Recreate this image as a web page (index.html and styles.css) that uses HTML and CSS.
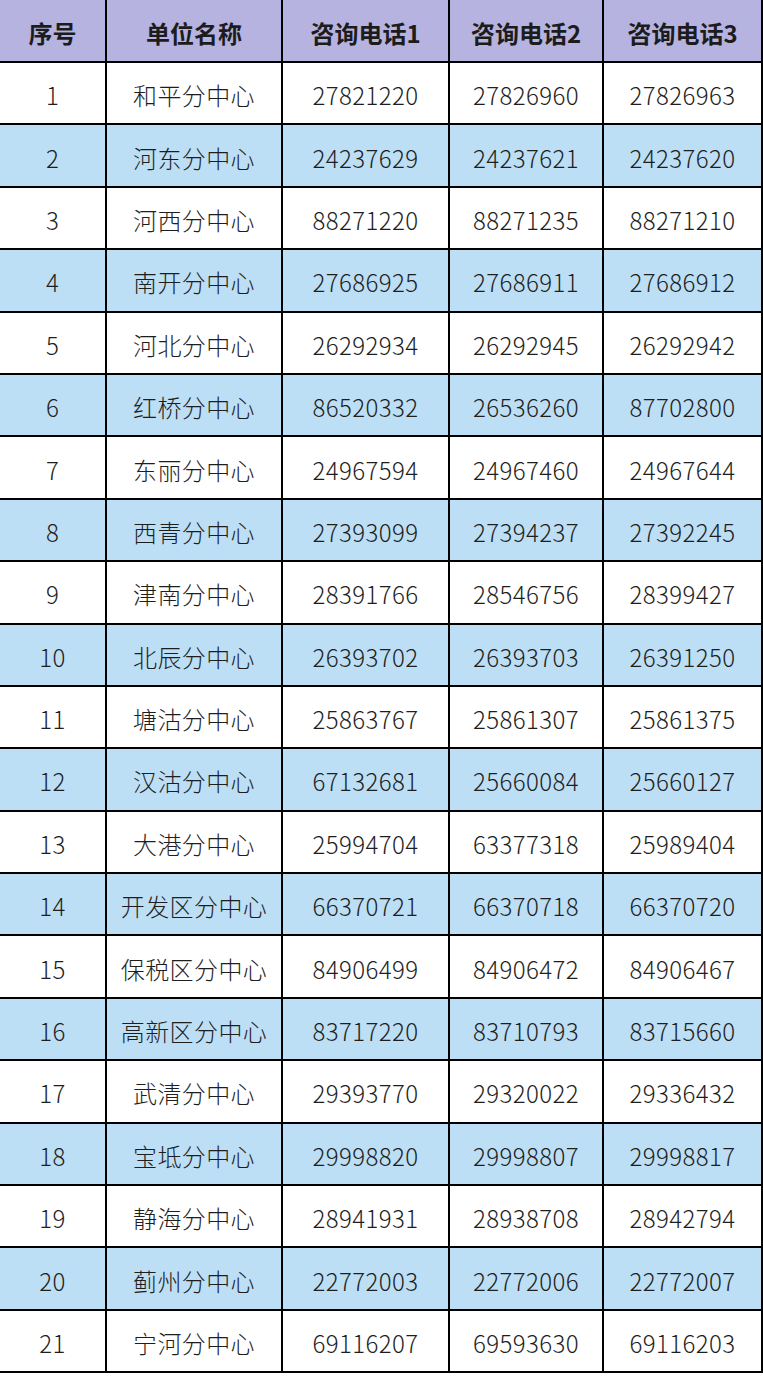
FILE: index.html
```html
<!DOCTYPE html>
<html lang="zh-CN">
<head>
<meta charset="utf-8">
<title>咨询电话</title>
<link rel="stylesheet" href="styles.css">
</head>
<body>
<div class="table">
  <div class="row head"><div class="cell">序号</div><div class="cell">单位名称</div><div class="cell">咨询电话1</div><div class="cell">咨询电话2</div><div class="cell">咨询电话3</div></div>
  <div class="row"><div class="cell">1</div><div class="cell">和平分中心</div><div class="cell">27821220</div><div class="cell">27826960</div><div class="cell">27826963</div></div>
  <div class="row alt"><div class="cell">2</div><div class="cell">河东分中心</div><div class="cell">24237629</div><div class="cell">24237621</div><div class="cell">24237620</div></div>
  <div class="row"><div class="cell">3</div><div class="cell">河西分中心</div><div class="cell">88271220</div><div class="cell">88271235</div><div class="cell">88271210</div></div>
  <div class="row alt"><div class="cell">4</div><div class="cell">南开分中心</div><div class="cell">27686925</div><div class="cell">27686911</div><div class="cell">27686912</div></div>
  <div class="row"><div class="cell">5</div><div class="cell">河北分中心</div><div class="cell">26292934</div><div class="cell">26292945</div><div class="cell">26292942</div></div>
  <div class="row alt"><div class="cell">6</div><div class="cell">红桥分中心</div><div class="cell">86520332</div><div class="cell">26536260</div><div class="cell">87702800</div></div>
  <div class="row"><div class="cell">7</div><div class="cell">东丽分中心</div><div class="cell">24967594</div><div class="cell">24967460</div><div class="cell">24967644</div></div>
  <div class="row alt"><div class="cell">8</div><div class="cell">西青分中心</div><div class="cell">27393099</div><div class="cell">27394237</div><div class="cell">27392245</div></div>
  <div class="row"><div class="cell">9</div><div class="cell">津南分中心</div><div class="cell">28391766</div><div class="cell">28546756</div><div class="cell">28399427</div></div>
  <div class="row alt"><div class="cell">10</div><div class="cell">北辰分中心</div><div class="cell">26393702</div><div class="cell">26393703</div><div class="cell">26391250</div></div>
  <div class="row"><div class="cell">11</div><div class="cell">塘沽分中心</div><div class="cell">25863767</div><div class="cell">25861307</div><div class="cell">25861375</div></div>
  <div class="row alt"><div class="cell">12</div><div class="cell">汉沽分中心</div><div class="cell">67132681</div><div class="cell">25660084</div><div class="cell">25660127</div></div>
  <div class="row"><div class="cell">13</div><div class="cell">大港分中心</div><div class="cell">25994704</div><div class="cell">63377318</div><div class="cell">25989404</div></div>
  <div class="row alt"><div class="cell">14</div><div class="cell">开发区分中心</div><div class="cell">66370721</div><div class="cell">66370718</div><div class="cell">66370720</div></div>
  <div class="row"><div class="cell">15</div><div class="cell">保税区分中心</div><div class="cell">84906499</div><div class="cell">84906472</div><div class="cell">84906467</div></div>
  <div class="row alt"><div class="cell">16</div><div class="cell">高新区分中心</div><div class="cell">83717220</div><div class="cell">83710793</div><div class="cell">83715660</div></div>
  <div class="row"><div class="cell">17</div><div class="cell">武清分中心</div><div class="cell">29393770</div><div class="cell">29320022</div><div class="cell">29336432</div></div>
  <div class="row alt"><div class="cell">18</div><div class="cell">宝坻分中心</div><div class="cell">29998820</div><div class="cell">29998807</div><div class="cell">29998817</div></div>
  <div class="row"><div class="cell">19</div><div class="cell">静海分中心</div><div class="cell">28941931</div><div class="cell">28938708</div><div class="cell">28942794</div></div>
  <div class="row alt"><div class="cell">20</div><div class="cell">蓟州分中心</div><div class="cell">22772003</div><div class="cell">22772006</div><div class="cell">22772007</div></div>
  <div class="row"><div class="cell">21</div><div class="cell">宁河分中心</div><div class="cell">69116207</div><div class="cell">69593630</div><div class="cell">69116203</div></div>
</div>
</body>
</html>
```
FILE: styles.css
```css
html, body {
  margin: 0;
  padding: 0;
  background: #ffffff;
}
body {
  width: 763px;
  font-family: "Noto Sans CJK SC", "Noto Sans", sans-serif;
  font-size: 24px;
  font-weight: 300;
  color: #1e1e1e;
}
.table {
  width: 763px;
  display: flex;
  flex-direction: column;
  gap: 2px;
  background: #000000;
  padding: 0 0 2px 0;
  box-sizing: border-box;
}
.row {
  display: grid;
  grid-template-columns: 105px 174px 165px 152px 157px;
  column-gap: 2px;
  height: 60.4px;
}
.row.head {
  height: 61px;
}
.cell {
  background: #ffffff;
  display: flex;
  align-items: center;
  justify-content: center;
  padding-top: 3px;
  box-sizing: border-box;
  white-space: nowrap;
  letter-spacing: 0.4px;
}
.row .cell:first-child {
  margin-left: -1px;
  padding-left: 1px;
}
.row.alt .cell {
  background: #bddff5;
}
.row.head .cell {
  background: #b6b3e1;
  font-weight: 700;
  color: #1c1c1c;
  letter-spacing: 0;
}
```
